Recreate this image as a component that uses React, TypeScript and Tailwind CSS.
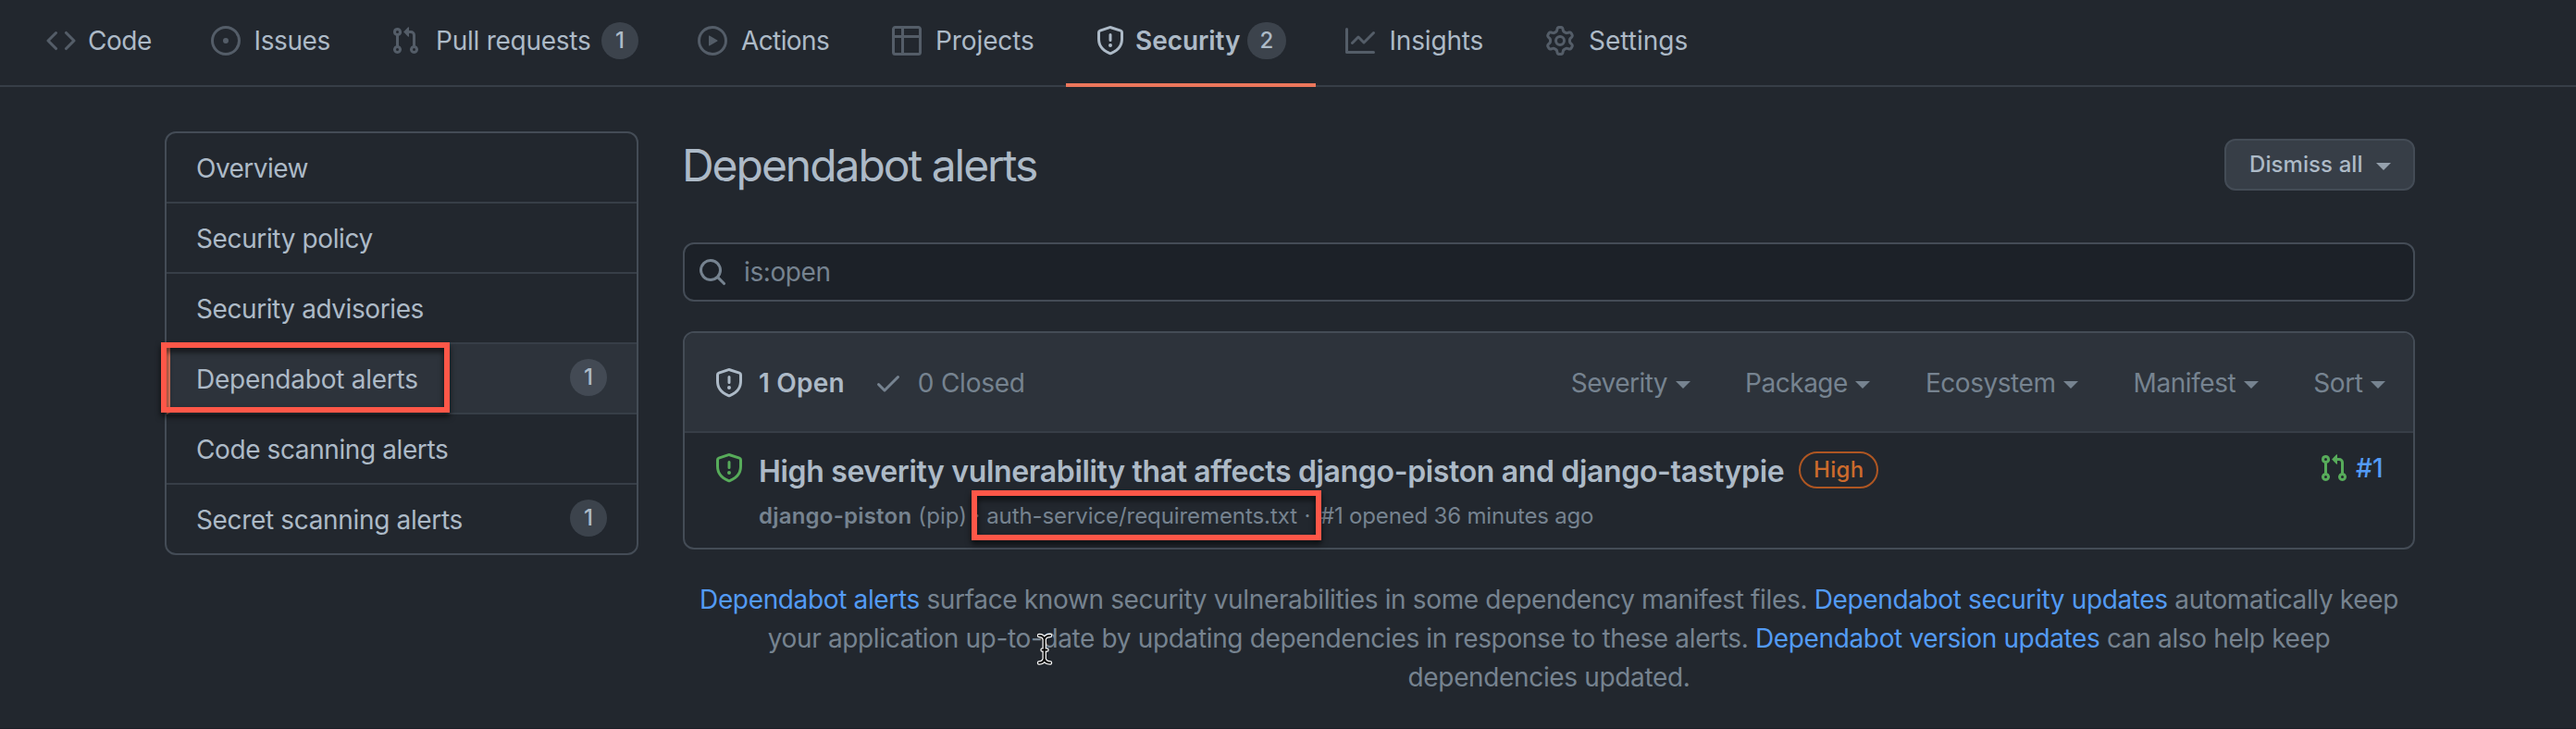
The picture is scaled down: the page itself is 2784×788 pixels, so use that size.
import React from "react";

const PATHS = {
  code: "M4.72 3.22a.75.75 0 011.06 1.06L2.06 8l3.72 3.72a.75.75 0 11-1.06 1.06L.47 8.53a.75.75 0 010-1.06l4.25-4.25zm6.56 0a.75.75 0 10-1.06 1.06L13.94 8l-3.72 3.72a.75.75 0 101.06 1.06l4.25-4.25a.75.75 0 000-1.06l-4.25-4.25z",
  issue: "M8 9.5a1.5 1.5 0 100-3 1.5 1.5 0 000 3zM8 0a8 8 0 100 16A8 8 0 008 0zM1.5 8a6.5 6.5 0 1113 0 6.5 6.5 0 01-13 0z",
  pull: "M7.177 3.073L9.573.677A.25.25 0 0110 .854v4.792a.25.25 0 01-.427.177L7.177 3.427a.25.25 0 010-.354zM3.75 2.5a.75.75 0 100 1.5.75.75 0 000-1.5zm-2.25.75a2.25 2.25 0 113 2.122v5.256a2.251 2.251 0 11-1.5 0V5.372A2.25 2.25 0 011.5 3.25zM11 2.5h-1V4h1a1 1 0 011 1v5.628a2.251 2.251 0 101.5 0V5A2.5 2.5 0 0011 2.5zm1 10.25a.75.75 0 111.5 0 .75.75 0 01-1.5 0zM3.75 12a.75.75 0 100 1.5.75.75 0 000-1.5z",
  play: "M1.5 8a6.5 6.5 0 1113 0 6.5 6.5 0 01-13 0zM8 0a8 8 0 100 16A8 8 0 008 0zM6.379 5.227A.25.25 0 006 5.442v5.117a.25.25 0 00.379.214l4.264-2.559a.25.25 0 000-.428L6.379 5.227z",
  table: "M0 1.75C0 .784.784 0 1.75 0h12.5C15.216 0 16 .784 16 1.75v12.5A1.75 1.75 0 0114.25 16H6.309a.748.748 0 01-1.118 0H1.75A1.75 1.75 0 010 14.25V1.75zM1.5 6.5v7.75c0 .138.112.25.25.25H5v-8H1.5zM6.5 6.5v8h7.75a.25.25 0 00.25-.25V6.5h-8zm8-1.5V1.75a.25.25 0 00-.25-.25H6.5V5h8zm-13 0H5V1.5H1.75a.25.25 0 00-.25.25V5z",
  shield: "M7.467.133a1.75 1.75 0 011.066 0l5.25 1.68A1.75 1.75 0 0115 3.48V7c0 1.566-.32 3.182-1.303 4.682-.983 1.498-2.585 2.813-5.032 3.855a1.7 1.7 0 01-1.33 0c-2.447-1.042-4.049-2.357-5.032-3.855C1.32 10.182 1 8.566 1 7V3.48a1.75 1.75 0 011.217-1.667l5.25-1.68zm.61 1.429a.25.25 0 00-.153 0l-5.25 1.68a.25.25 0 00-.174.238V7c0 1.358.275 2.666 1.057 3.86.784 1.194 2.121 2.34 4.366 3.297a.2.2 0 00.154 0c2.245-.956 3.582-2.104 4.366-3.298C13.225 9.666 13.5 8.36 13.5 7V3.48a.25.25 0 00-.174-.237l-5.25-1.68zM9 10.5a1 1 0 11-2 0 1 1 0 012 0zm-.25-5.75a.75.75 0 10-1.5 0v3a.75.75 0 001.5 0v-3z",
  graph: "M1.5 1.75a.75.75 0 00-1.5 0v12.5c0 .414.336.75.75.75h14.5a.75.75 0 000-1.5H1.5V1.75zm14.28 2.53a.75.75 0 00-1.06-1.06L10 7.94 7.53 5.47a.75.75 0 00-1.06 0L3.22 8.72a.75.75 0 001.06 1.06L7 7.06l2.47 2.47a.75.75 0 001.06 0l5.25-5.25z",
  gear: "M7.429 1.525a6.593 6.593 0 011.142 0c.036.003.108.036.137.146l.289 1.105c.147.56.55.967.997 1.189.174.086.341.183.501.29.417.278.97.423 1.53.27l1.102-.303c.11-.03.175.016.195.046.219.31.41.641.573.989.014.031.022.11-.059.19l-.815.806c-.411.406-.562.957-.53 1.456a4.588 4.588 0 010 .582c-.032.499.119 1.05.53 1.456l.815.806c.08.08.073.159.059.19a6.494 6.494 0 01-.573.99c-.02.029-.086.074-.195.045l-1.103-.303c-.559-.153-1.112-.008-1.529.27-.16.107-.327.204-.5.29-.449.222-.851.628-.998 1.189l-.289 1.105c-.029.11-.101.143-.137.146a6.613 6.613 0 01-1.142 0c-.036-.003-.108-.037-.137-.146l-.289-1.105c-.147-.56-.55-.967-.997-1.189a4.502 4.502 0 01-.501-.29c-.417-.278-.97-.423-1.53-.27l-1.102.303c-.11.03-.175-.016-.195-.046a6.492 6.492 0 01-.573-.989c-.014-.031-.022-.11.059-.19l.815-.806c.411-.406.562-.957.53-1.456a4.587 4.587 0 010-.582c.032-.499-.119-1.05-.53-1.456l-.815-.806c-.08-.08-.073-.159-.059-.19a6.44 6.44 0 01.573-.99c.02-.029.086-.075.195-.045l1.103.303c.559.153 1.112.008 1.529-.27.16-.107.327-.204.5-.29.449-.222.851-.628.998-1.189l.289-1.105c.029-.11.101-.143.137-.146zM8 0c-.236 0-.47.01-.701.03-.743.065-1.29.615-1.458 1.261l-.29 1.106c-.017.066-.078.158-.211.224a5.994 5.994 0 00-.668.386c-.123.082-.233.09-.3.071L3.27 2.776c-.644-.177-1.392.02-1.82.63a7.977 7.977 0 00-.704 1.217c-.315.675-.111 1.422.363 1.891l.815.806c.05.048.098.147.088.294a6.084 6.084 0 000 .772c.01.147-.038.246-.088.294l-.815.806c-.474.469-.678 1.216-.363 1.891.2.428.436.835.704 1.218.428.609 1.176.806 1.82.63l1.103-.303c.066-.019.176-.011.299.071.213.143.436.272.668.386.133.066.194.158.212.224l.289 1.106c.169.646.715 1.196 1.458 1.26a8.094 8.094 0 001.402 0c.743-.064 1.29-.614 1.458-1.26l.29-1.106c.017-.066.078-.158.211-.224a5.98 5.98 0 00.668-.386c.123-.082.233-.09.3-.071l1.102.302c.644.177 1.392-.02 1.82-.63.268-.382.505-.789.704-1.217.315-.675.111-1.422-.364-1.891l-.814-.806c-.05-.048-.098-.147-.088-.294a6.1 6.1 0 000-.772c-.01-.147.039-.246.088-.294l.814-.806c.475-.469.679-1.216.364-1.891a7.992 7.992 0 00-.704-1.218c-.428-.609-1.176-.806-1.82-.63l-1.103.303c-.066.019-.176.011-.299-.071a5.991 5.991 0 00-.668-.386c-.133-.066-.194-.158-.212-.224L10.16 1.29C9.99.645 9.444.095 8.701.031A8.094 8.094 0 008 0zm1.5 8a1.5 1.5 0 11-3 0 1.5 1.5 0 013 0zM11 8a3 3 0 11-6 0 3 3 0 016 0z",
  search: "M11.5 7a4.499 4.499 0 11-8.998 0A4.499 4.499 0 0111.5 7zm-.82 4.74a6 6 0 111.06-1.06l3.04 3.04a.75.75 0 11-1.06 1.06l-3.04-3.04z",
  check: "M13.78 4.22a.75.75 0 010 1.06l-7.25 7.25a.75.75 0 01-1.06 0L2.22 9.28a.75.75 0 011.06-1.06L6 10.94l6.72-6.72a.75.75 0 011.06 0z",
};

type IconName = keyof typeof PATHS;

function Icon({ name, className = "" }: { name: IconName; className?: string }) {
  return (
    <svg viewBox="0 0 16 16" className={`size-8 shrink-0 ${className}`} fill="currentColor" fillRule="evenodd" aria-hidden="true">
      <path d={PATHS[name]} />
    </svg>
  );
}

function Caret({ className = "" }: { className?: string }) {
  return (
    <svg viewBox="0 0 16 8" className={`mt-1 h-2 w-4 shrink-0 ${className}`} fill="currentColor" aria-hidden="true">
      <path d="M0 0h16L8 8z" />
    </svg>
  );
}

function Counter({ children, className = "w-10" }: { children: React.ReactNode; className?: string }) {
  return (
    <span className={`ml-auto h-10 shrink-0 rounded-full bg-[#636e7b]/40 text-center text-[24px] leading-[39px] font-medium tracking-normal ${className}`}>
      {children}
    </span>
  );
}

const tabs: { icon: IconName; label: string; width: string; text: string; count?: number; active?: boolean }[] = [
  { icon: "code", label: "Code", width: "w-[178px]", text: "ml-[13px] tracking-[-0.46px]" },
  { icon: "issue", label: "Issues", width: "w-[194px]", text: "ml-[14.5px] tracking-[-0.39px]" },
  { icon: "pull", label: "Pull requests", width: "w-[332px]", text: "ml-[17px] tracking-[-0.25px]", count: 1 },
  { icon: "play", label: "Actions", width: "w-[210px]", text: "ml-[15px] tracking-[-0.6px]" },
  { icon: "table", label: "Projects", width: "w-[220px]", text: "ml-[15px] tracking-[-0.1px]" },
  { icon: "shield", label: "Security", width: "w-[270px]", text: "ml-[11px] font-semibold tracking-[-0.06px]", count: 2, active: true },
  { icon: "graph", label: "Insights", width: "w-[216px]", text: "ml-[15.5px] tracking-[-0.18px]" },
  { icon: "gear", label: "Settings", width: "w-[220px]", text: "ml-[15px] tracking-[0px]" },
];

const sections: { label: string; text: string; count?: number; active?: boolean }[] = [
  { label: "Overview", text: "tracking-[-0.53px]" },
  { label: "Security policy", text: "tracking-[-0.38px]" },
  { label: "Security advisories", text: "tracking-[-0.42px]" },
  { label: "Dependabot alerts", text: "tracking-[-0.24px]", count: 1, active: true },
  { label: "Code scanning alerts", text: "tracking-[-0.4px]" },
  { label: "Secret scanning alerts", text: "tracking-[-0.34px]", count: 1 },
];

const filters = [
  { label: "Severity", text: "tracking-[-0.53px]" },
  { label: "Package", text: "tracking-[-0.48px]" },
  { label: "Ecosystem", text: "tracking-[-0.45px]" },
  { label: "Manifest", text: "tracking-[-0.43px]" },
  { label: "Sort", text: "tracking-[-0.41px]" },
];

function Link({ children }: { children: React.ReactNode }) {
  return <a className="text-[#539bf5]">{children}</a>;
}

export default function App() {
  return (
    <div className="relative h-[788px] w-[2784px] overflow-hidden border-b border-[#1c1f27] bg-[#22272e] font-['Inter','Liberation_Sans',sans-serif] text-[28px] leading-[42px] whitespace-nowrap text-[#adbac7]">
      <nav className="flex h-[94px] border-b-2 border-[#373e47] pl-[18px]">
        {tabs.map((t) => (
          <a
            key={t.label}
            className={`flex h-[94px] shrink-0 items-center border-b-4 px-8 pb-[2px] ${t.width} ${t.active ? "border-[#ec775c]" : "border-transparent"}`}
          >
            <Icon name={t.icon} className={t.active ? "text-[#adbac7]" : "text-[#545d68]"} />
            <span className={t.text}>{t.label}</span>
            {t.count !== undefined && <Counter className={t.active ? "w-[42px]" : "w-10"}>{t.count}</Counter>}
          </a>
        ))}
      </nav>

      <div className="flex gap-12 pt-12 pl-[178px]">
        <aside className="h-[458px] w-[512px] shrink-0 overflow-hidden rounded-xl border-2 border-[#444c56]">
          {sections.map((s) => (
            <a
              key={s.label}
              className={`flex h-[76px] items-start border-b-2 border-[#373e47] pt-4 pr-8 last:border-b-0 ${s.active ? "border-l-4 border-l-[#ec775c] bg-[#2d333b] pl-[28px]" : "pl-8"}`}
            >
              <span className={`mt-px ${s.text}`}>{s.label}</span>
              {s.count !== undefined && <Counter>{s.count}</Counter>}
            </a>
          ))}
        </aside>

        <main className="w-[1872px] shrink-0">
          <header className="flex h-[72px] items-start justify-between">
            <h1 className="mt-px -ml-px text-[48px] leading-[72px] tracking-[-2.04px]">Dependabot alerts</h1>
            <button className="mt-2 flex h-14 w-[206px] items-center rounded-xl border-2 border-[#444c56] bg-[#373e47] pl-[25px] text-[24px] leading-[40px] font-medium tracking-[0.09px]">
              Dismiss all
              <Caret className="ml-[14px] opacity-80" />
            </button>
          </header>

          <div className="mt-12 flex h-16 items-center rounded-xl border-2 border-[#444c56] bg-[#1c2128] pl-[14px] text-[#768390]">
            <Icon name="search" />
            <span className="ml-[18px] tracking-[-0.4px]">is:open</span>
          </div>

          <section className="mt-8 h-[236px] overflow-hidden rounded-xl border-2 border-[#444c56]">
            <div className="flex h-[108px] items-center border-b-2 border-[#373e47] bg-[#2d333b] pt-[2px] pr-[30px] pl-8 text-[#768390]">
              <Icon name="shield" className="text-[#adbac7]" />
              <span className="ml-4 font-semibold tracking-[0.21px] text-[#adbac7]">1 Open</span>
              <Icon name="check" className="ml-[31px]" />
              <span className="ml-4 tracking-[-0.24px]">0 Closed</span>
              <div className="ml-auto flex gap-[59.5px]">
                {filters.map((f) => (
                  <span key={f.label} className="flex items-center">
                    <span className={f.text}>{f.label}</span>
                    <Caret className="ml-[8.5px]" />
                  </span>
                ))}
              </div>
            </div>

            <div className="flex items-start pr-[32px] pl-8">
              <Icon name="shield" className="mt-[22px] text-[#57ab5a]" />
              <div className="mt-[18px] ml-4">
                <div className="flex h-12 items-start">
                  <span className="text-[32px] leading-[48px] font-semibold tracking-[-0.35px]">
                    High severity vulnerability that affects django-piston and django-tastypie
                  </span>
                  <span className="mt-[2px] ml-4 h-10 w-[86px] rounded-full border-2 border-[#ae5622] text-center text-[24px] leading-[35px] font-medium tracking-[0.3px] text-[#cc6b2c]">
                    High
                  </span>
                </div>
                <div className="mt-[5px] flex text-[24px] leading-[37px] text-[#768390]">
                  <span className="font-semibold tracking-[0.216px]">django-piston</span>
                  <span className="ml-[7px] tracking-[0.078px]">(pip)</span>
                  <span className="w-[21px] text-center">·</span>
                  <span className="tracking-[-0.08px]">auth-service/requirements.txt</span>
                  <span className="mr-[3px] w-[22px] text-center">·</span>
                  <span className="tracking-[-0.18px]">#1 opened 36 minutes ago</span>
                </div>
              </div>
              <a className="mt-[17px] ml-auto flex items-center gap-2">
                <Icon name="pull" className="text-[#57ab5a]" />
                <span className="font-medium tracking-[0.3px] text-[#539bf5]">#1</span>
              </a>
            </div>
          </section>

          <p className="mt-[33px] text-center tracking-[-0.353px] text-[#768390]">
            <Link>Dependabot alerts</Link> surface known security vulnerabilities in some dependency manifest files. <Link>Dependabot security updates</Link> automatically keep
            <br />
            your application up-to-date by updating dependencies in response to these alerts. <Link>Dependabot version updates</Link> can also help keep
            <br />
            dependencies updated.
          </p>
        </main>
      </div>

      <div className="absolute top-[370px] left-[174px] h-[76px] w-[312px] border-6 border-[#ff5748] drop-shadow-[0_4px_3px_rgba(0,0,0,0.7)]" />
      <div className="absolute top-[530px] left-[1050px] h-[54px] w-[378px] border-6 border-[#ff5748] drop-shadow-[0_4px_3px_rgba(0,0,0,0.7)]" />

      <svg viewBox="0 0 20 36" className="absolute top-[684px] left-[1119px] h-9 w-5" fill="none" strokeLinecap="round" strokeLinejoin="round" aria-hidden="true">
        <g stroke="#fff" strokeWidth="4.4">
          <path d="M4 3C7 3 9 4.200 9.700 7C10.400 4.200 12.500 3 16 3M9.700 7V28M4 32.500C7 32.500 9 31 9.700 28C10.400 31 12.500 32.500 16 32.500M7.500 18.500h5" />
        </g>
        <g stroke="#000" strokeWidth="2">
          <path d="M4 3C7 3 9 4.200 9.700 7C10.400 4.200 12.500 3 16 3M9.700 7V28M4 32.500C7 32.500 9 31 9.700 28C10.400 31 12.500 32.500 16 32.500M7.500 18.500h5" />
        </g>
      </svg>
    </div>
  );
}
